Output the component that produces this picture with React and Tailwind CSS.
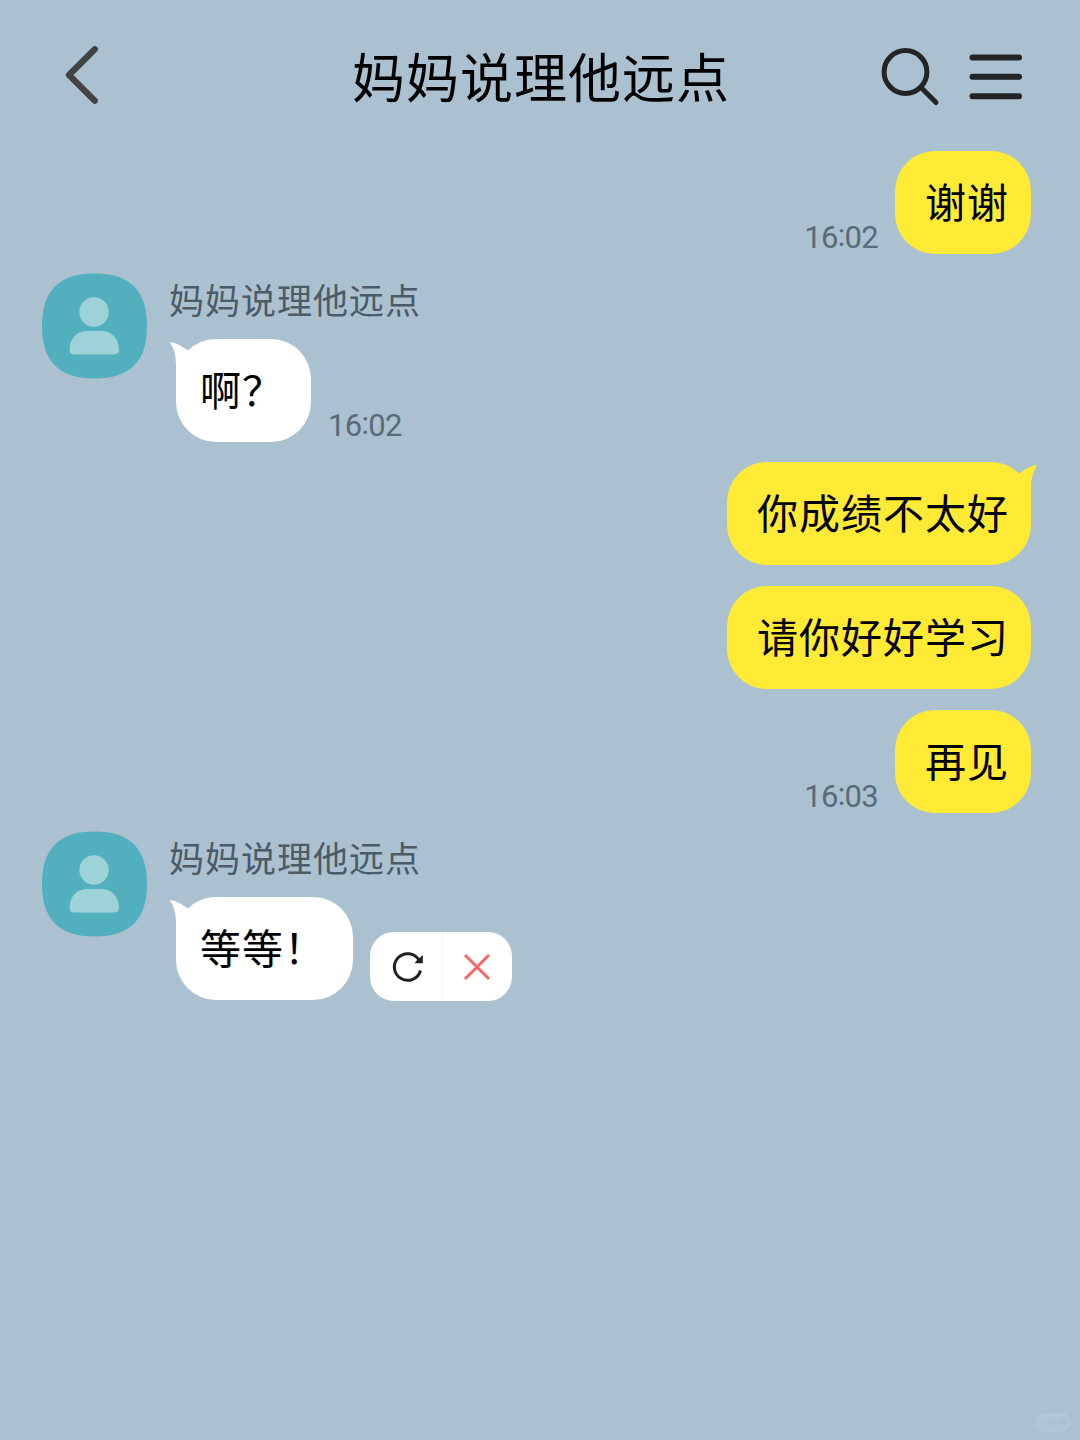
import React from 'react';
import clsx from 'clsx';

const CONTACT = '妈妈说理他远点';

const Avatar = () => (
  <svg className="w-[106px] h-[106px] shrink-0" viewBox="0 0 106 106">
    <path d="M52.500 0.500C88 0.500 105 17.500 105 53S88 105.500 52.500 105.500S0 88.500 0 53S17 0.500 52.500 0.500Z" fill="#51afbe" />
    <circle cx="52" cy="39" r="14.700" fill="#9ed2d9" />
    <path d="M27.500 77C27.500 65 35.500 58 45 58H59.500C69 58 77 65 77 77Q77 81.500 71.500 81.500H33Q27.500 81.500 27.500 77Z" fill="#9ed2d9" />
  </svg>
);

const Tail = ({ mine }) => (
  <svg
    className={clsx('absolute top-[3px] w-6 h-10', mine ? '-right-[6px] text-[#ffea36] -scale-x-100' : '-left-[6px] text-white')}
    viewBox="0 0 24 40"
    fill="currentColor"
  >
    <path d="M0.800 0.200C6 0.700 11 3.600 17.600 8.300L24 14V40H6V24C6 14 4.500 7 0.300 1.400Q-0.100 0.200 0.800 0.200Z" />
  </svg>
);

const Bubble = ({ mine, tail, children }) => (
  <div
    className={clsx(
      'relative h-[103px] rounded-[40px] pb-[5px] flex items-center whitespace-nowrap text-[41px] leading-none tracking-[1px] text-black',
      mine ? 'bg-[#ffea36] pl-[30px] pr-[22px]' : 'bg-white pl-6 pr-[27px]'
    )}
  >
    {tail && <Tail mine={mine} />}
    <span className="relative">{children}</span>
  </div>
);

const Time = ({ children }) => {
  const [hours, minutes] = children.split(':');
  return (
    <span className="font-[Roboto,sans-serif] text-[31px] leading-[32px] tracking-[-0.7px] text-[#596b78]">
      {hours}<span className="align-[2px] leading-none">:</span>{minutes}
    </span>
  );
};

const Sent = ({ time, tail, children }) => (
  <div className="flex justify-end items-end gap-[17px] pr-[49px]">
    {time && <Time>{time}</Time>}
    <Bubble mine tail={tail}>{children}</Bubble>
  </div>
);

const Received = ({ after, children }) => (
  <div className="flex items-start pl-[42px] gap-[21px]">
    <Avatar />
    <div>
      <div className="h-[66px] pt-[8px] text-[35px] leading-[36px] tracking-[1px] text-[#4c5b66]">{CONTACT}</div>
      <div className="flex items-end gap-[17px] pl-[7px]">
        <Bubble tail>{children}</Bubble>
        {after}
      </div>
    </div>
  </div>
);

const RetryPanel = () => (
  <div className="flex w-[142px] h-[69px] -mb-[1px] rounded-[24px] bg-white">
    <button className="w-[73px] pl-[2px] pb-px border-r border-[#f3f3f5] flex items-center justify-center">
      <svg className="w-9 h-9" viewBox="0 0 36 36" fill="none">
        <path d="M31.500 22.500A13.300 13.300 0 1 1 30 12" stroke="#202020" strokeWidth="3" />
        <path d="M33.800 7V15.200H25.500L28.500 11.500L31 9.500Z" fill="#202020" />
      </svg>
    </button>
    <button className="flex-1 pr-[2px] flex items-center justify-center">
      <svg className="w-7 h-7" viewBox="0 0 28 28" fill="none" stroke="#fa6666" strokeWidth="3">
        <path d="M2 2L26 26M26 2L2 26" />
      </svg>
    </button>
  </div>
);

const Header = () => (
  <header className="h-[151px] pb-px flex items-start justify-between pl-[62px] pr-[57px]">
    <svg className="w-[141px] h-[64px] mt-[43px]" viewBox="0 0 141 64" fill="none" stroke="#434343" strokeWidth="6.200" strokeLinecap="round" strokeLinejoin="round">
      <path d="M32.800 6.200L7 32L32.800 57.800" />
    </svg>
    <h1 className="mt-[46px] text-[53px] leading-[58px] tracking-[1px] text-black">{CONTACT}</h1>
    <div className="mt-[43px] flex gap-[26px]">
      <svg className="w-[64px] h-[64px]" viewBox="0 0 64 64" fill="none" stroke="#222426" strokeWidth="5" strokeLinecap="round">
        <circle cx="26.500" cy="29" r="21.400" />
        <path d="M43 45.500L57 59.500" />
      </svg>
      <svg className="w-[54px] h-[64px]" viewBox="0 0 54 64" stroke="#222426" strokeWidth="6" strokeLinecap="round">
        <path d="M3.500 14.500H50M3.500 33.800H50M3.500 53.300H50" />
      </svg>
    </div>
  </header>
);

export default function App() {
  return (
    <div className="relative w-[1080px] h-[1440px] overflow-hidden bg-[#abc1d0] font-['Noto_Sans_CJK_SC',sans-serif]" lang="zh-CN">
      <Header />
      <main className="flex flex-col">
        <Sent time="16:02">谢谢</Sent>
        <div className="mt-[19px]">
          <Received after={<Time>16:02</Time>}>啊？</Received>
        </div>
        <div className="mt-5 flex flex-col gap-[21px]">
          <Sent tail>你成绩不太好</Sent>
          <Sent>请你好好学习</Sent>
          <Sent time="16:03">再见</Sent>
        </div>
        <div className="mt-[18px]">
          <Received after={<RetryPanel />}>等等！</Received>
        </div>
      </main>
      <div className="absolute right-[9px] bottom-[8px] w-[36px] h-[19px] rounded-full bg-[#b2c7d5] flex items-center justify-center text-[9px] leading-none text-[#a7bdcc]">
        小红书
      </div>
    </div>
  );
}
